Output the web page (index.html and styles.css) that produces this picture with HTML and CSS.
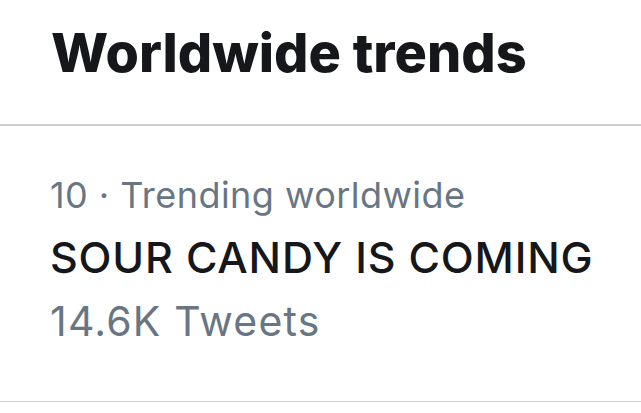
FILE: index.html
```html
<!DOCTYPE html>
<html>
<head>
<meta charset="utf-8">
<link rel="stylesheet" href="styles.css">
</head>
<body>
<div class="panel">
  <div class="header"><h1 class="title">Worldwide trends</h1></div>
  <div class="trend">
    <div class="meta">10 · Trending worldwide</div>
    <div class="name">SOUR CANDY IS COMING</div>
    <div class="count">14.6K Tweets</div>
  </div>
</div>
</body>
</html>
```
FILE: styles.css
```css
html, body { margin: 0; padding: 0; background: #fff; }
body { font-family: Inter, "Noto Sans", sans-serif; width: 641px; height: 413px; overflow: hidden; }
.panel { display: flex; flex-direction: column; }
.header { border-bottom: 2px solid #cfcfd1; padding-left: 51px; box-sizing: border-box; height: 126px; }
.title { margin: 0; padding-top: 22px; font-size: 54px; font-weight: 800; color: #16171a; line-height: 62px; letter-spacing: 0; }
.trend { padding-left: 50px; height: 276px; border-bottom: 1px solid #cfcfd1; box-sizing: border-box; padding-top: 49px; }
.meta { font-size: 36px; color: #687684; line-height: 40px; letter-spacing: 0.45px; }
.name { font-size: 43px; font-weight: 500; color: #16171a; line-height: 48px; margin-top: 18px; letter-spacing: 0.8px; }
.count { font-size: 41px; color: #687684; line-height: 44px; margin-top: 18px; letter-spacing: 1.2px; }
```
